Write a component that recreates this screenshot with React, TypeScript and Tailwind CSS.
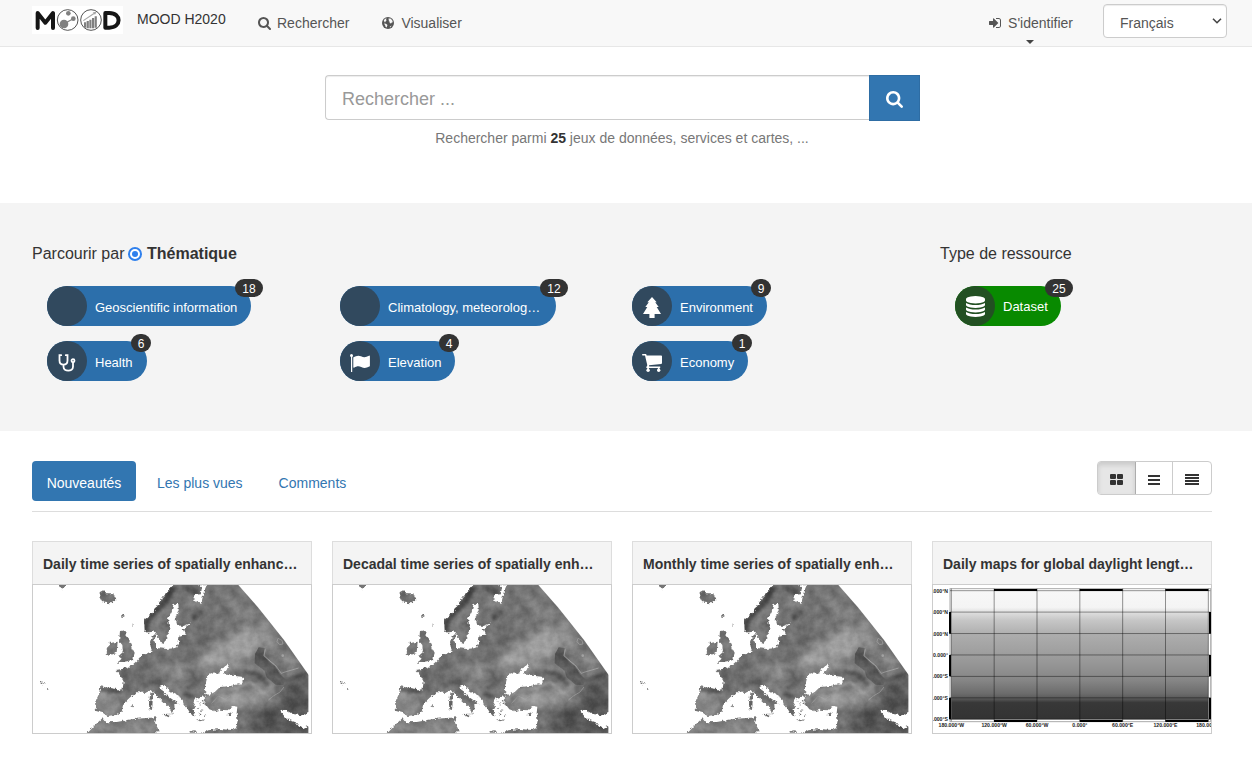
import React from "react";

type IconProps = { className?: string };

const SearchIcon = ({ className }: IconProps) => (
  <svg viewBox="0 128 1664 1664" className={className} fill="currentColor">
    <path d="M1152 832q0-185-131.500-316.500T704 384 387.500 515.500 256 832t131.500 316.500T704 1280t316.500-131.500T1152 832zm512 832q0 52-38 90t-90 38q-54 0-90-38l-343-342q-179 124-399 124-143 0-273.500-55.500t-225-150-150-225T0 832t55.500-273.500 150-225 225-150T704 128t273.500 55.500 225 150 150 225T1408 832q0 220-124 399l343 343q37 37 37 90z" />
  </svg>
);

const SignInIcon = ({ className }: IconProps) => (
  <svg viewBox="0 256 1536 1280" className={className} fill="currentColor">
    <path d="M1184 896q0 26-19 45l-544 544q-19 19-45 19t-45-19-19-45v-288H64q-26 0-45-19t-19-45V704q0-26 19-45t45-19h448V352q0-26 19-45t45-19 45 19l544 544q19 19 19 45zm352-352v704q0 119-84.500 203.500T1248 1536H928q-13 0-22.500-9.500T896 1504q0-4-1-20t-.5-26.500 3-23.500 10-19.500 20.500-6.500h320q66 0 113-47t47-113V544q0-66-47-113t-113-47H936l-11.500-1-11.500-3-8-5.500-7-9-2-13.500q0-4-1-20t-.5-26.500 3-23.500 10-19.500 20.500-6.500h320q119 0 203.500 84.500T1536 544z" />
  </svg>
);

const GlobeIcon = ({ className }: IconProps) => (
  <svg viewBox="0 0 24 24" className={className}>
    <circle cx="12" cy="12" r="12" fill="currentColor" />
    <path
      d="M13 3l4 0 3.500 3.500 1 4-2 .5-1.500 2-2.500-1-.5-3-2-1 1.500-2-1.500-1zM3.500 7l2.500-3.500L9.500 3 8 5.500l1 2L6.500 9.500 6 11.500zM4 13l4 .5 3 2.500-1 2.500L9.500 21 7 19.500 6.500 17zM15 20l4-3-1.500 3.500z"
      fill="#f8f8f8"
    />
  </svg>
);

const StethoscopeIcon = ({ className }: IconProps) => (
  <svg viewBox="0 0 18 18" className={className} fill="none" stroke="currentColor" strokeWidth="1.800" strokeLinecap="round">
    <path d="M3.200 1.200H1.500v5.300C1.500 9 3.300 10.600 5.500 10.600S9.500 9 9.500 6.500V1.200H7.800M5.500 10.800v2c0 5.200 9.500 5.200 9.500 0V8.500" />
    <circle cx="15" cy="6.700" r="1.500" />
  </svg>
);

const FlagIcon = ({ className }: IconProps) => (
  <svg viewBox="0 0 20 18" className={className} fill="currentColor">
    <circle cx="1.500" cy="1.500" r="1.500" />
    <rect x="1" y="1" width="1.200" height="17" />
    <path d="M3.500 3.300C6 1.700 8.500 1.200 11 2.300c3 1.400 5 1 8-.6q.8-.3.900.5V11.700q0 .5-.5.800c-3.200 1.700-5.300 1.900-8.200.5-2.600-1.300-5-.6-7.100.7q-.8.300-.8-.6V3.900q0-.4.200-.6z" />
  </svg>
);

const CartIcon = ({ className }: IconProps) => (
  <svg viewBox="0 0 20 18" className={className} fill="currentColor">
    <path d="M0 .8C0 .3.300 0 .8 0h3.300l.6 1.500h14.500c.5 0 .8.300.8.800v6.800c0 .4-.3.700-.7.800L7 11.300l.2 1.300h11v1.500H5.100c-.7 0-1-.5-.7-1.100l.9-1.700L3 1.600H.8C.3 1.600 0 1.300 0 .8z" />
    <circle cx="6.100" cy="16.200" r="1.700" />
    <circle cx="16.700" cy="16.200" r="1.700" />
    <path d="M5.300 13h1.600v3H5.300zM15.900 13h1.600v3h-1.600z" />
  </svg>
);

const TreeIcon = ({ className }: IconProps) => (
  <svg viewBox="0 0 18 21" className={className} fill="currentColor">
    <path d="M9 0l4.700 5.300h-1.500L15.700 10h-2L18 17h-6.400v4H6.400v-4H0l4.300-7h-2l3.500-4.700H4.300z" />
  </svg>
);

const DatabaseIcon = ({ className }: IconProps) => (
  <svg viewBox="0 0 1536 1792" preserveAspectRatio="none" className={className} fill="currentColor">
    <path d="M768 768q237 0 443-43t325-127v170q0 69-103 128t-280 93.500-385 34.500-385-34.500T103 896 0 768V598q119 84 325 127t443 43zm0 768q237 0 443-43t325-127v170q0 69-103 128t-280 93.500-385 34.500-385-34.500-280-93.500T0 1536v-170q119 84 325 127t443 43zm0-384q237 0 443-43t325-127v170q0 69-103 128t-280 93.500-385 34.500-385-34.500-280-93.500T0 1152V982q119 84 325 127t443 43zM768 0q208 0 385 34.500t280 93.500 103 128v128q0 69-103 128t-280 93.500T768 640t-385-34.500T103 512 0 384V256q0-69 103-128t280-93.500T768 0z" />
  </svg>
);

const GridIcon = () => (
  <svg viewBox="0 0 13 11" className="h-[11px] w-[13px]" fill="#333">
    <rect width="6" height="5" rx="1" />
    <rect x="7" width="6" height="5" rx="1" />
    <rect y="6" width="6" height="5" rx="1" />
    <rect x="7" y="6" width="6" height="5" rx="1" />
  </svg>
);

const BarsIcon = () => (
  <svg viewBox="0 0 12 10" className="h-[10px] w-[12px]" fill="#333">
    <rect width="12" height="2" />
    <rect y="4" width="12" height="2" />
    <rect y="8" width="12" height="2" />
  </svg>
);

const JustifyIcon = () => (
  <svg viewBox="0 0 14 11" className="h-[11px] w-[14px]" fill="#333">
    <rect width="14" height="2" />
    <rect y="3" width="14" height="2" />
    <rect y="6" width="14" height="2" />
    <rect y="9" width="14" height="2" />
  </svg>
);

const Logo = () => (
  <svg viewBox="0 0 273 84" className="mt-[6px] h-[28px] w-[91px] bg-white">
    <path d="M17 66V21l23 29 23-29v45" fill="none" stroke="#161616" strokeWidth="12" strokeLinecap="round" strokeLinejoin="round" />
    <g fill="white" stroke="#333" strokeWidth="2.500">
      <circle cx="107" cy="42" r="31" />
      <circle cx="177" cy="42" r="31" />
    </g>
    <g fill="#808080">
      <circle cx="96" cy="54" r="13" />
      <circle cx="109" cy="22" r="7" />
      <circle cx="124" cy="38" r="7" />
      <path d="M95 52l28-15 1 3-26 15z" />
      <path d="M156 49h6.500v16H156zM164 45h6.500v22H164zM172 41h6.500v26H172zM180 36h6.500v31H180zM188 31h6.500v34H188z" />
      <path d="M153 43l32-22-3-2 12-2-5 9-2-2-32 21z" opacity="0.700" />
    </g>
    <path d="M220 21h12c37 0 37 44 0 44h-12z" fill="none" stroke="#161616" strokeWidth="12" strokeLinejoin="round" />
  </svg>
);

const LAND =
  "M465 160L700 160 L880 435 V612 H545 L565 601 L600 597 L635 600 L648 595 L653 572 L650 550 L652 530 L640 528 L622 541 L600 539 L585 544 L568 538 L556 522 L548 510 L558 498 L540 501 L524 506 L520 516 L528 530 L517 536 L527 560 L512 552 L500 532 L491 522 L485 503 L462 491 L445 480 L431 462 L419 468 L432 488 L450 503 L476 521 L463 522 L464 540 L456 553 L450 534 L430 516 L408 494 L395 480 L375 489 L350 486 L338 498 L325 510 L309 526 L305 545 L290 555 L262 558 L248 548 L228 543 L225 517 L237 492 L241 469 L290 477 L307 482 L311 455 L300 434 L287 420 L311 416 L333 408 L350 393 L366 374 L383 371 L395 364 L390 336 L395 321 L408 310 L403 332 L409 354 L440 357 L468 354 L476 336 L479 316 L496 314 L488 296 L517 278 L490 288 L472 286 L466 266 L476 237 L475 222 L461 221 L455 244 L444 266 L447 285 L452 296 L439 322 L433 342 L421 338 L410 312 L403 301 L385 312 L374 303 L372 270 L400 247 L420 214 L438 188Z";

const EuropeMap = ({ id }: { id: string }) => (
  <svg viewBox="39 165 834 444" preserveAspectRatio="none" className="block h-[148px] w-[278px] bg-white">
    <defs>
      <filter id={`${id}-coast`} x="0" y="0" width="100%" height="100%" colorInterpolationFilters="sRGB">
        <feTurbulence type="fractalNoise" baseFrequency="0.100" numOctaves="2" seed="4" result="n" />
        <feDisplacementMap in="SourceGraphic" in2="n" scale="13" xChannelSelector="R" yChannelSelector="G" />
      </filter>
      <filter id={`${id}-soft`} x="-40%" y="-40%" width="180%" height="180%" colorInterpolationFilters="sRGB">
        <feGaussianBlur stdDeviation="17" />
      </filter>
      <filter id={`${id}-fine`} x="-40%" y="-40%" width="180%" height="180%" colorInterpolationFilters="sRGB">
        <feGaussianBlur stdDeviation="5" />
      </filter>
      <filter id={`${id}-grain`} x="0" y="0" width="100%" height="100%" colorInterpolationFilters="sRGB">
        <feTurbulence type="fractalNoise" baseFrequency="0.030" numOctaves="4" seed="8" />
        <feColorMatrix values="1.400 0 0 0 -0.250 1.400 0 0 0 -0.250 1.400 0 0 0 -0.250 0 0 0 0 1" />
      </filter>
      <clipPath id={`${id}-extent`}>
        <path d="M39 165H655L715 233L792 330L866 435V609H39Z" />
      </clipPath>
      <mask id={`${id}-mask`} maskUnits="userSpaceOnUse" x="39" y="165" width="834" height="444">
        <g filter={`url(#${id}-coast)`}>
          <rect x="30" y="155" width="852" height="464" fill="black" />
          <g fill="white">
            <path d={LAND} />
            <path d="M200 612L225 585L247 565L256 577L290 576L340 567L410 562L405 578L416 600L405 612ZM508 604L525 601L538 608H510Z" />
            <path d="M300 303L322 300L316 316L330 333L335 355L344 371L339 390L290 399L305 386L295 379L309 366L307 345L297 334Z" />
            <path d="M270 339L293 335L290 369L265 377L257 365Z" />
            <path d="M238 187L250 181L256 190L280 190L289 208L276 220L252 218L244 207Z" />
            <path d="M115 165H142L124 178ZM391 489L400 486L398 508L388 510ZM387 515L398 514L396 540L388 538ZM426 552L452 551L446 562ZM618 556L635 545L631 555ZM528 568L557 569L540 574Z" />
            <path d="M334 529L342 526L341 532ZM307 255h6v5h-6zM62 456h5v3h-5zM70 459h5v4h-5zM81 475h4v4h-4zM335 280l4 3-4 8z" />
            <path d="M528 508l5 4-6 4zM538 519l7 3-4 5zM530 536l8-3-2 7zM545 537l5 4-6 3zM536 550l7 2-5 5zM552 553l7 3-5 3zM549 517l5 3-5 4z" />
          </g>
          <g fill="black">
            <path d="M556 492L555 469L562 440L576 426L597 434L600 420L628 400L620 420L609 432L638 437L665 440L672 450L660 462L630 468L600 471L585 485L570 494Z" />
            <path d="M520 207L527 194L543 193L545 178L538 166H560L552 184L548 202L544 219Z" />
            <path d="M781 544L796 540L820 553L848 556L880 545V580L850 594L837 590L827 577L801 568Z" />
          </g>
        </g>
      </mask>
    </defs>
    <g clipPath={`url(#${id}-extent)`}>
      <g mask={`url(#${id}-mask)`}>
        <rect x="39" y="165" width="827" height="444" fill="#757575" />
        <g filter={`url(#${id}-soft)`}>
          <path d="M560 165L655 165L760 290L640 260Z" fill="#7c7c7c" />
          <path d="M640 310L740 290L780 320L720 340L690 380L560 435L530 400Z" fill="#aaa" />
          <path d="M740 350L800 370L850 420L800 430Z" fill="#8a8a8a" />
          <path d="M570 490L640 480L760 470L760 500L670 520L590 530Z" fill="#a6a6a6" />
          <path d="M440 410L490 405L510 460L440 455Z" fill="#949494" />
          <path d="M225 480L300 490L290 550L225 545Z" fill="#949494" />
          <path d="M230 590H430V609H190Z" fill="#a6a6a6" />
          <path d="M470 300L590 290L570 350L490 360Z" fill="#666" />
          <path d="M300 415L385 385L390 460L310 480Z" fill="#6a6a6a" />
          <path d="M690 550L770 520L800 460L870 410V620H670Z" fill="#505050" />
          <path d="M655 540L680 510L700 540L665 600Z" fill="#8a8a8a" />
        </g>
        <g filter={`url(#${id}-fine)`}>
          <path d="M374 305L385 265L430 220L460 170" fill="none" stroke="#444" strokeWidth="18" />
          <path d="M485 165L540 172L535 195L505 190Z" fill="#505050" />
          <path d="M371 474L390 458L425 456M485 420L515 425L530 460L500 475" fill="none" stroke="#5a5a5a" strokeWidth="10" />
          <path d="M670 425L710 432L745 465M790 455L860 430M490 490L520 500M240 478L305 485" fill="none" stroke="#4c4c4c" strokeWidth="13" />
          <path d="M410 483L465 530" fill="none" stroke="#606060" strokeWidth="9" />
          <path d="M650 290L720 260" fill="none" stroke="#858585" strokeWidth="8" />
          <circle cx="523" cy="263" r="8" fill="#3c3c3c" />
          <circle cx="541" cy="246" r="5" fill="#444" />
          <path d="M560 510L590 480L650 475L690 455L730 490" fill="none" stroke="#b0b0b0" strokeWidth="6" />
        </g>
        <path
          d="M716 352L734 354L730 377L748 395L764 408L780 432L795 447L790 465L767 464L740 442L734 422L704 400L705 372Z"
          fill="#545454"
        />
        <path d="M736 358L732 377L750 393L768 408L784 430L798 425L836 414" fill="none" stroke="#a6a6a6" strokeWidth="3" />
        <path d="M774 325l12 6 3 11-10 2-8-9z" fill="#7c7c7c" stroke="#aaa" strokeWidth="2.500" />
        <circle cx="788" cy="377" r="4" fill="#aaa" />
        <path d="M575 520l20-22 20 10 15-10M745 510l15-12 20-12 12-15" fill="none" stroke="#aaa" strokeWidth="3" opacity="0.700" />
        <rect x="39" y="165" width="827" height="444" filter={`url(#${id}-grain)`} opacity="0.160" />
      </g>
    </g>
  </svg>
);

const LON = ["180.000°W", "120.000°W", "60.000°W", "0.000°", "60.000°E", "120.000°E", "180.000°E"];
const LAT = ["90.000°N", "60.000°N", "30.000°N", "0.000°", "30.000°S", "60.000°S", "90.000°S"];

const DaylightMap = () => (
  <svg
    viewBox="24 165 834 444"
    preserveAspectRatio="none"
    className="block h-[148px] w-[278px] bg-white font-['Liberation_Sans',sans-serif] text-[15.500px] font-bold"
  >
    <defs>
      <linearGradient id="daylight" x1="0" y1="0" x2="0" y2="1">
        <stop offset="0" stopColor="#f7f7f7" />
        <stop offset="0.130" stopColor="#f4f4f4" />
        <stop offset="0.170" stopColor="#dedede" />
        <stop offset="0.230" stopColor="#c6c6c6" />
        <stop offset="0.350" stopColor="#acacac" />
        <stop offset="0.550" stopColor="#989898" />
        <stop offset="0.700" stopColor="#858585" />
        <stop offset="0.800" stopColor="#6c6c6c" />
        <stop offset="0.840" stopColor="#585858" />
        <stop offset="0.870" stopColor="#383838" />
        <stop offset="1" stopColor="#333" />
      </linearGradient>
    </defs>
    <rect x="75" y="176" width="782" height="399" fill="white" stroke="#aaa" strokeWidth="3" />
    <rect x="79" y="182" width="771" height="386" fill="url(#daylight)" />
    {[0, 1, 2, 3, 4, 5, 6].map((i) => (
      <g key={i}>
        <path d={`M${79 + i * 128.500} 176V574M75 ${182 + i * 64.300}H856`} stroke="#000" strokeOpacity="0.420" strokeWidth="3" />
        <text x={79 + i * 128.500} y="591" textAnchor="middle" fill="#222">
          {LON[i]}
        </text>
        <text x="69" y={188 + i * 64.300} textAnchor="end" fill="#222">
          {LAT[i]}
        </text>
      </g>
    ))}
    <path d="M207 180h129M464 180h129M721 180h129M207 573h129M464 573h129M721 573h129" stroke="black" strokeWidth="6" />
    <path d="M75 246v65M75 375v64M75 503v65M855 246v65M855 375v64M855 503v65" stroke="black" strokeWidth="6" />
  </svg>
);

type ChipProps = { label: string; count: number; width: string; green?: boolean; icon?: React.ReactNode };

const Chip = ({ label, count, width, green, icon }: ChipProps) => (
  <div className={`relative flex h-10 items-center rounded-full text-[13px] text-white ${green ? "bg-[#088a00]" : "bg-[#2c6fab]"} ${width}`}>
    <span className={`flex size-10 shrink-0 items-center justify-center rounded-full ${green ? "bg-[#225022]" : "bg-[#31495e]"}`}>{icon}</span>
    <span className={`ml-2 leading-[18px] whitespace-nowrap ${green ? "mt-px" : "mt-[3px]"}`}>{label}</span>
    <span
      className={`absolute -top-[7px] flex h-[18px] items-center justify-center rounded-full bg-[#333] pt-[2px] text-xs leading-none ${
        count > 9 ? "-right-3 w-7" : "-right-1 w-5"
      }`}
    >
      {count}
    </span>
  </div>
);

const TITLES = ["Daily time series of spatially enhanc…", "Decadal time series of spatially enh…", "Monthly time series of spatially enh…", "Daily maps for global daylight lengt…"];

export default function App() {
  return (
    <div className="h-[773px] w-[1252px] overflow-hidden bg-white font-['Liberation_Sans',Arial,sans-serif] text-sm text-[#333]">
      <nav className="flex h-[47px] items-start border-b border-[#e7e7e7] bg-[#f8f8f8] pr-[25px] pl-8 text-[#555]">
        <Logo />
        <span className="mt-[9px] ml-[14px] w-[89px] leading-5 whitespace-nowrap text-[#333]">MOOD H2020</span>
        <a className="mt-[13px] ml-8 flex items-center leading-5">
          <SearchIcon className="mr-[6px] size-[13px]" />
          Rechercher
        </a>
        <a className="mt-[13px] ml-[33px] flex items-center leading-5">
          <GlobeIcon className="mr-[7px] size-3" />
          Visualiser
        </a>
        <div className="mt-[13px] mr-[30px] ml-auto flex flex-col items-center">
          <a className="flex items-center leading-5">
            <SignInIcon className="mr-[7px] h-[10px] w-[12px]" />
            S'identifier
          </a>
          <svg viewBox="0 0 8 4" className="mt-[7px] mr-[3px] h-1 w-2" fill="#444">
            <path d="M0 0h8L4 4z" />
          </svg>
        </div>
        <div className="mt-1 flex h-[34px] w-[124px] items-center justify-between rounded border border-[#ccc] bg-white pr-1 pl-4 shadow-[inset_0_1px_1px_rgba(0,0,0,0.075)]">
          <span className="mt-[3px]">Français</span>
          <svg viewBox="0 0 10 6" className="h-[6px] w-[10px]" fill="none" stroke="#444" strokeWidth="1.600">
            <path d="M1 .7l4 4 4-4" />
          </svg>
        </div>
      </nav>

      <section className="flex h-[156px] flex-col items-center pt-7 pr-[7px]">
        <div className="flex w-[595px] items-start">
          <div className="flex h-[45px] flex-1 items-center rounded-l-[4px] border border-r-0 border-[#ccc] px-4 pt-[3px] text-lg text-[#999] shadow-[inset_0_1px_1px_rgba(0,0,0,0.075)]">Rechercher ...</div>
          <button className="flex h-[46px] w-[51px] items-center justify-center border border-[#2e6da4] bg-[#3276b1] pt-[3px] text-white">
            <SearchIcon className="size-[17px]" />
          </button>
        </div>
        <p className="mt-[7px] pr-px leading-5 text-[#777]">
          Rechercher parmi <b className="text-[#333]">25</b> jeux de données, services et cartes, ...
        </p>
      </section>

      <section className="flex h-[228px] bg-[#f4f4f4] pt-[39px] pl-8">
        <div className="w-[908px]">
          <h2 className="flex h-6 items-center text-base whitespace-pre">
            <span className="w-24">Parcourir par </span>
            <span className="mr-[5px] flex size-[14px] items-center justify-center rounded-full border-2 border-[#2f80ed] bg-white">
              <span className="size-[6px] rounded-full bg-[#2f80ed]" />
            </span>
            <b>Thématique</b>
          </h2>
          <div className="mt-5 grid grid-cols-[293px_292px_292px] gap-y-[15px] pl-[15px]">
            <Chip label="Geoscientific information" count={18} width="w-[204px]" />
            <Chip label="Climatology, meteorolog…" count={12} width="w-[216px]" />
            <Chip label="Environment" count={9} width="w-[135px]" icon={<TreeIcon className="mt-[2px] h-[21px] w-[18px]" />} />
            <Chip label="Health" count={6} width="w-[100px]" icon={<StethoscopeIcon className="mt-[3px] size-[18px]" />} />
            <Chip label="Elevation" count={4} width="w-[115px]" icon={<FlagIcon className="mt-[3px] h-[18px] w-[20px]" />} />
            <Chip label="Economy" count={1} width="w-[116px]" icon={<CartIcon className="mt-[3px] h-[18px] w-[20px]" />} />
          </div>
        </div>
        <div>
          <h2 className="flex h-6 items-center text-base">Type de ressource</h2>
          <div className="mt-5 pl-[15px]">
            <Chip label="Dataset" count={25} width="w-[106px]" green icon={<DatabaseIcon className="h-[21px] w-[19px]" />} />
          </div>
        </div>
      </section>

      <section className="mx-8 mr-10 pt-[30px]">
        <div className="flex h-[51px] items-start border-b border-[#ddd] text-[#3276b1]">
          <div className="flex h-10 w-[104px] items-center justify-center rounded bg-[#3276b1] pt-1 text-white">Nouveautés</div>
          <div className="ml-[21px] flex h-10 items-center pt-1">Les plus vues</div>
          <div className="ml-9 flex h-10 items-center pt-1">Comments</div>
          <div className="ml-auto flex h-[34px] w-[115px] overflow-hidden rounded border border-[#ccc]">
            <div className="flex w-[38px] items-center justify-center border-r border-[#adadad] bg-[#e6e6e6] pt-[3px] shadow-[inset_0_3px_5px_rgba(0,0,0,0.125)]">
              <GridIcon />
            </div>
            <div className="flex w-[37px] items-center justify-center border-r border-[#ccc] pt-[4px]">
              <BarsIcon />
            </div>
            <div className="flex flex-1 items-center justify-center pt-[3px]">
              <JustifyIcon />
            </div>
          </div>
        </div>
        <div className="mt-[29px] grid grid-cols-4 gap-5">
          {TITLES.map((t, i) => (
            <article key={t}>
              <h3 className="flex h-[43px] items-center border border-b-0 border-[#ddd] bg-[#f4f4f4] pt-px pl-[10px] font-bold whitespace-nowrap">{t}</h3>
              <div className="h-[150px] overflow-hidden border border-[#ccc]">{i < 3 ? <EuropeMap id={`map${i}`} /> : <DaylightMap />}</div>
            </article>
          ))}
        </div>
      </section>
    </div>
  );
}
